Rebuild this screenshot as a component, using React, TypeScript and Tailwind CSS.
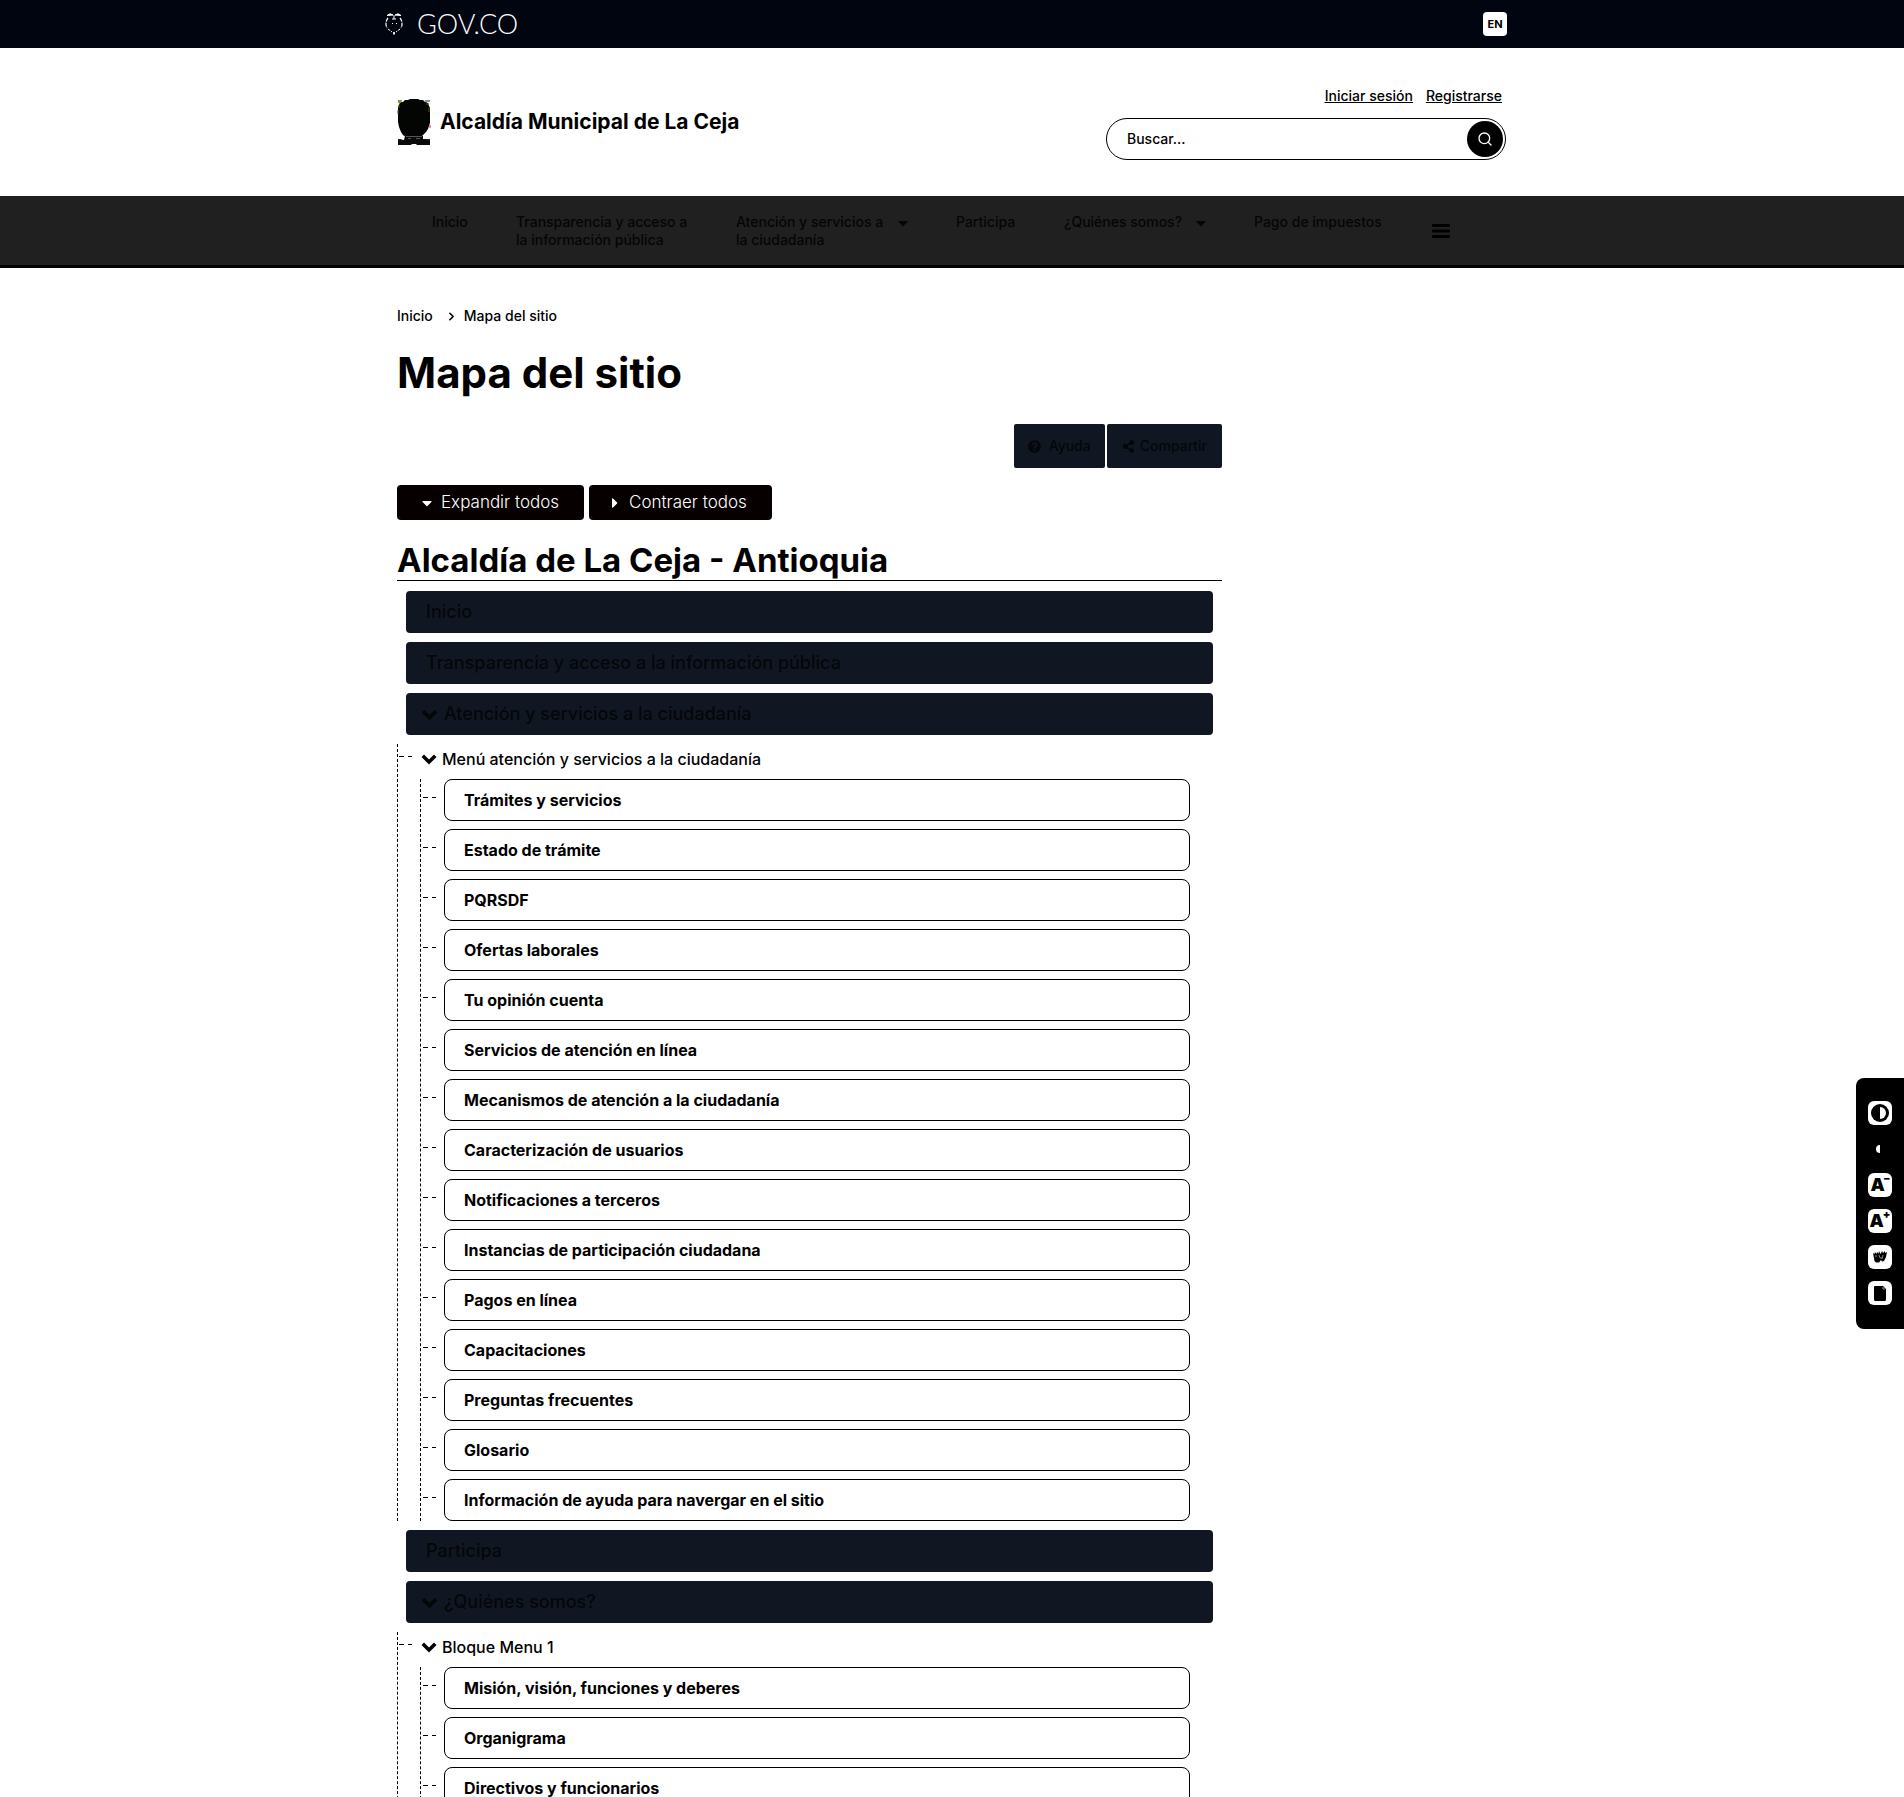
import React from "react";
import { FaCaretDown, FaCaretRight, FaQuestionCircle, FaShareAlt } from "react-icons/fa";
import { FiChevronRight, FiSearch } from "react-icons/fi";

type Group = { title: string; items: string[] };
type Section = { title: string; group?: Group };

const sections: Section[] = [
  { title: "Inicio" },
  { title: "Transparencia y acceso a la información pública" },
  {
    title: "Atención y servicios a la ciudadanía",
    group: {
      title: "Menú atención y servicios a la ciudadanía",
      items: [
        "Trámites y servicios",
        "Estado de trámite",
        "PQRSDF",
        "Ofertas laborales",
        "Tu opinión cuenta",
        "Servicios de atención en línea",
        "Mecanismos de atención a la ciudadanía",
        "Caracterización de usuarios",
        "Notificaciones a terceros",
        "Instancias de participación ciudadana",
        "Pagos en línea",
        "Capacitaciones",
        "Preguntas frecuentes",
        "Glosario",
        "Información de ayuda para navergar en el sitio",
      ],
    },
  },
  { title: "Participa" },
  {
    title: "¿Quiénes somos?",
    group: {
      title: "Bloque Menu 1",
      items: ["Misión, visión, funciones y deberes", "Organigrama", "Directivos y funcionarios"],
    },
  },
];

const navItems = [
  { lines: ["Inicio"], width: "w-9" },
  { lines: ["Transparencia y acceso a", "la información pública"], width: "w-[172px]" },
  { lines: ["Atención y servicios a", "la ciudadanía"], width: "w-[172px]", caret: true },
  { lines: ["Participa"], width: "w-[60px]" },
  { lines: ["¿Quiénes somos?"], width: "w-[142px]", caret: true },
  { lines: ["Pago de impuestos"], width: "w-[130px]" },
];

function GovShield() {
  return (
    <svg viewBox="0 0 18 22" className="h-[22px] w-[18px]" fill="none" stroke="#fff" aria-hidden="true">
      <path d="M2 2.500 5 .8 8 2zM10 2 13 .8 16 2.500z" fill="#fff" />
      <path d="M9 2v4M7 6h4" />
      <path d="M3 5C.5 8 .5 12 2 15" strokeWidth="1.200" strokeDasharray="4 1" />
      <path d="M15 5c2.500 3 2.500 7 1 10" strokeWidth="1.200" strokeDasharray="4 1" />
      <path d="M3 16l4 3M15 16l-4 3" strokeDasharray="2.500 1" />
      <path d="M7 10.500h1M11 10.500h1" />
      <path d="M9 19v2.500" strokeWidth="1.800" />
    </svg>
  );
}

function TownCrest() {
  return (
    <svg viewBox="0 0 34 48" className="h-12 w-[34px]" aria-hidden="true">
      <path
        d="M3 4l3 0 2-2 3 0 2-1h8l2 1 3 0 2 2 3 1 1 3 1 2v15l-2 6-2 3-3 3-2 2H9l-3-2-2-3-2-5-1-5V9l1-2z"
        fill="#030503"
      />
      <path d="M8 38h18v3h7v6H20l-1-1h-4l-1 1H1v-5h6z" fill="#0a0a0a" />
      <path d="M9 38.500h16M11 40.500h3M19 40.500h4" stroke="#777" strokeWidth=".7" />
      <path d="M1 41h5l-5 2zM27 41h6v2z" fill="#222" />
      <path d="M1 2h4l-1 3H1z" fill="#7c9a2e" />
      <path d="M2 7v3M1 12v4M32 10v4M29 6h3" stroke="#46621b" />
      <path d="M28 3h5M29 4v1" stroke="#222" />
      <path d="M33 27v3" stroke="#b0304a" />
    </svg>
  );
}

function HeavyChevron({ className }: { className: string }) {
  return (
    <svg viewBox="0 0 16 16" className={className} aria-hidden="true">
      <path d="M.5 6 3 3.500l5 5 5-5L15.500 6 8 13.500z" fill="currentColor" />
    </svg>
  );
}

function Tick() {
  return (
    <span className="flex w-[14px] shrink-0 gap-1" aria-hidden="true">
      <span className="h-px w-[5px] bg-black" />
      <span className="h-px w-1 bg-black" />
    </span>
  );
}

function SiteGroup({ group }: { group: Group }) {
  return (
    <div className="mt-[9px] border-l border-dashed border-black pr-8">
      <div className="flex h-[31px]">
        <span className="ml-px mr-2 mt-3">
          <Tick />
        </span>
        <a href="#" className="flex h-[29px] items-center gap-[5px] text-base font-medium text-black">
          <HeavyChevron className="size-4" />
          {group.title}
        </a>
      </div>
      <ul className="ml-[22px] mt-1 space-y-2 border-l border-dashed border-black">
        {group.items.map((item) => (
          <li key={item} className="flex">
            <span className="ml-[2px] mr-[7px] mt-[18px]">
              <Tick />
            </span>
            <a
              href="#"
              className="flex h-[42px] flex-1 items-center rounded-lg border border-black px-[19px] text-base font-bold text-black"
            >
              {item}
            </a>
          </li>
        ))}
      </ul>
    </div>
  );
}

function AccessButton({ label, children, ghost }: { label: string; children: React.ReactNode; ghost?: boolean }) {
  return (
    <button
      type="button"
      aria-label={label}
      className={
        ghost
          ? "flex size-6 items-center justify-center rounded-md bg-black"
          : "flex size-6 items-center justify-center rounded-md bg-white"
      }
    >
      {children}
    </button>
  );
}

export default function App() {
  return (
    <div className="h-screen overflow-hidden bg-white font-['Inter',sans-serif] text-black">
      <div className="bg-[#00050f]">
        <div className="mx-auto flex h-12 max-w-[1140px] items-center justify-between pl-[3px] pr-[15px]">
          <a href="#" className="flex items-center gap-[14px] font-['Lato',sans-serif] text-[27px] font-light leading-6 text-white">
            <GovShield />
            GOV.CO
          </a>
          <button type="button" className="size-6 rounded bg-white text-[11px] font-bold leading-none text-black">
            EN
          </button>
        </div>
      </div>

      <header className="mx-auto flex h-[148px] max-w-[1140px] items-center justify-between px-[15px]">
        <a href="#" className="flex items-center gap-[9px] text-[21px] font-bold">
          <TownCrest />
          Alcaldía Municipal de La Ceja
        </a>
        <div className="w-[401px] pr-px pt-[2px]">
          <div className="flex justify-end gap-[13px] pr-1 text-sm font-medium leading-5 underline">
            <a href="#">Iniciar sesión</a>
            <a href="#">Registrarse</a>
          </div>
          <form
            role="search"
            onSubmit={(e) => e.preventDefault()}
            className="mt-3 flex h-[42px] items-center rounded-full border border-black pl-5 pr-[2px]"
          >
            <input
              aria-label="Buscar"
              placeholder="Buscar..."
              className="min-w-0 flex-1 bg-transparent text-sm font-medium outline-none placeholder:text-black"
            />
            <button
              type="submit"
              aria-label="Buscar"
              className="flex size-9 items-center justify-center rounded-full bg-black text-white"
            >
              <FiSearch className="size-4" />
            </button>
          </form>
        </div>
      </header>

      <nav className="h-[72px] border-b-[3px] border-black bg-[#202020] text-[#050505]">
        <ul className="mx-auto flex max-w-[1140px] gap-12 pl-[50px] pt-[17px]">
          {navItems.map((item) => (
            <li key={item.lines[0]} className={item.width}>
              <a href="#" className="flex justify-between whitespace-nowrap text-sm font-medium leading-[18px]">
                <span>
                  {item.lines.map((line) => (
                    <span key={line} className="block">
                      {line}
                    </span>
                  ))}
                </span>
                {item.caret && <FaCaretDown className="mt-[2px] h-4 w-[10px]" />}
              </a>
            </li>
          ))}
          <li>
            <button type="button" aria-label="Menú" className="mt-[10px] block text-black">
              <svg viewBox="0 0 18 16" className="h-4 w-[18px]" fill="currentColor" aria-hidden="true">
                <rect y="1" width="18" height="3" rx="1" />
                <rect y="6.500" width="18" height="3" rx="1" />
                <rect y="12" width="18" height="3" rx="1" />
              </svg>
            </button>
          </li>
        </ul>
      </nav>

      <div className="mx-auto max-w-[1140px] px-[15px]">
        <main className="w-full max-w-[825px] pt-[38px]">
          <ol className="flex items-center text-sm font-medium leading-5">
            <li className="flex items-center">
              <a href="#">Inicio</a>
              <FiChevronRight className="ml-3 mr-[6px] size-[13px]" strokeWidth={3} />
            </li>
            <li>Mapa del sitio</li>
          </ol>

          <h1 className="mt-6 text-[42px] font-bold leading-[46px]">Mapa del sitio</h1>

          <div className="mt-7 flex justify-end gap-[2px] text-sm font-medium text-[#04060a]">
            <button type="button" className="flex h-11 items-center gap-2 rounded-[2px] bg-[#111722] px-[14px]">
              <FaQuestionCircle className="size-[13px]" />
              Ayuda
            </button>
            <button type="button" className="flex h-11 items-center gap-[5px] rounded-[2px] bg-[#111722] px-[15px]">
              <FaShareAlt className="size-[13px]" />
              Compartir
            </button>
          </div>

          <div className="mt-[17px] flex gap-[5px] text-[17px] font-light text-white">
            <button type="button" className="flex h-[35px] w-[187px] items-center gap-2 rounded bg-[#070000] pl-6">
              <FaCaretDown className="h-4 w-3" />
              Expandir todos
            </button>
            <button type="button" className="flex h-[35px] w-[183px] items-center gap-2 rounded bg-[#070000] pl-5">
              <FaCaretRight className="h-4 w-3" />
              Contraer todos
            </button>
          </div>

          <h2 className="mt-5 border-b border-black text-[33px] font-bold leading-10">
            Alcaldía de La Ceja - Antioquia
          </h2>

          <ul className="mt-[10px] space-y-[9px]">
            {sections.map((s) => (
              <li key={s.title}>
                <a
                  href="#"
                  className={
                    s.group
                      ? "mx-[9px] flex h-[42px] items-center gap-[6px] rounded bg-[#111722] px-[15px] text-lg font-medium text-[#04060a]"
                      : "mx-[9px] flex h-[42px] items-center rounded bg-[#111722] px-5 text-lg font-medium text-[#04060a]"
                  }
                >
                  {s.group && <HeavyChevron className="size-[17px]" />}
                  {s.title}
                </a>
                {s.group && <SiteGroup group={s.group} />}
              </li>
            ))}
          </ul>
        </main>
      </div>

      <aside
        aria-label="Accesibilidad"
        className="fixed right-0 top-[60vh] flex w-12 flex-col gap-3 rounded-l-lg bg-black pb-6 pl-3 pt-[23px]"
      >
        <AccessButton label="Contraste">
          <svg viewBox="0 0 24 24" className="size-6" aria-hidden="true">
            <circle cx="12" cy="12" r="9" fill="#000" />
            <path d="M12 6a6 6 0 0 1 0 12z" fill="#fff" />
          </svg>
        </AccessButton>
        <AccessButton label="Escala de grises" ghost>
          <svg viewBox="0 0 24 24" className="size-6" aria-hidden="true">
            <path d="M12 8a4 4 0 0 0 0 8z" fill="#fff" />
          </svg>
        </AccessButton>
        <AccessButton label="Reducir letra">
          <span className="flex items-start text-lg font-black leading-5">
            A<span className="-ml-px text-[11px] font-black leading-[7px]">–</span>
          </span>
        </AccessButton>
        <AccessButton label="Aumentar letra">
          <span className="flex items-start text-lg font-black leading-5">
            A<span className="-ml-px text-[11px] font-black leading-[7px]">+</span>
          </span>
        </AccessButton>
        <AccessButton label="Lengua de señas">
          <svg viewBox="0 0 24 24" className="size-6" aria-hidden="true">
            <path d="M5 8l1.500 1L7 7l1.500 2L9 7l1.500 1.500L11 6l1.500 3L14 6l1 2 2-2v2l2-1-1 5-2 4-2 .5-1-1.500-2 2.500H8L6.500 16z" fill="#000" />
            <path d="M11 10l1 3M15 10l-1 4M8 10v2M13 12v2" stroke="#aaa" strokeWidth=".8" />
          </svg>
        </AccessButton>
        <AccessButton label="Documento">
          <svg viewBox="0 0 24 24" className="size-6" aria-hidden="true">
            <path d="M6 6q0-1 1-1h8l3 3v10q0 2-1 2H7q-1 0-1-2z" fill="#000" />
            <path d="M15 6v2h2" stroke="#bbb" strokeWidth=".8" fill="none" />
          </svg>
        </AccessButton>
      </aside>
    </div>
  );
}
